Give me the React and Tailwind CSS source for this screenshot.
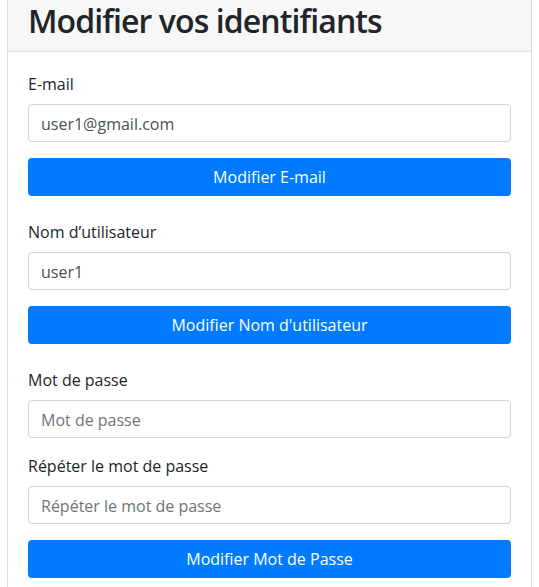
const FONT = { fontFamily: '"Open Sans", "Noto Sans", sans-serif' };

function Field({ label, value, placeholder }) {
  return (
    <div className="flex flex-col">
      <label className="mb-2 text-base leading-6 text-[#212529]">{label}</label>
      <input
        type="text"
        defaultValue={value}
        placeholder={placeholder}
        className="h-[38px] w-full rounded border border-[#ced4da] bg-white px-3 pt-[2px] text-base text-[#495057] placeholder:text-[#6c757d] focus:outline-none"
      />
    </div>
  );
}

function SubmitButton({ children }) {
  return (
    <button className="h-[38px] w-full rounded bg-[#007bff] text-base text-white">
      {children}
    </button>
  );
}

export default function App() {
  return (
    <div className="min-h-screen bg-white pl-[7px] pr-[7px]" style={FONT}>
      <div className="rounded-b border-x border-b border-[#dfdfdf] bg-white">
        <div className="border-b border-[#dfdfdf] bg-[#f7f7f7] px-5 pb-[11px] pt-[2px]">
          <h2 className="text-[32px] font-semibold leading-[38px] tracking-[-0.9px] text-[#212529]">
            Modifier vos identifiants
          </h2>
        </div>
        <div className="flex flex-col px-5 pb-5 pt-5">
          <Field label="E-mail" value="user1@gmail.com" />
          <div className="mt-4">
            <SubmitButton>Modifier E-mail</SubmitButton>
          </div>

          <div className="mt-6">
            <Field label="Nom d’utilisateur" value="user1" />
          </div>
          <div className="mt-4">
            <SubmitButton>Modifier Nom d'utilisateur</SubmitButton>
          </div>

          <div className="mt-6">
            <Field label="Mot de passe" placeholder="Mot de passe" />
          </div>
          <div className="mt-4">
            <Field label="Répéter le mot de passe" placeholder="Répéter le mot de passe" />
          </div>
          <div className="mt-4">
            <SubmitButton>Modifier Mot de Passe</SubmitButton>
          </div>
        </div>
      </div>
    </div>
  );
}
